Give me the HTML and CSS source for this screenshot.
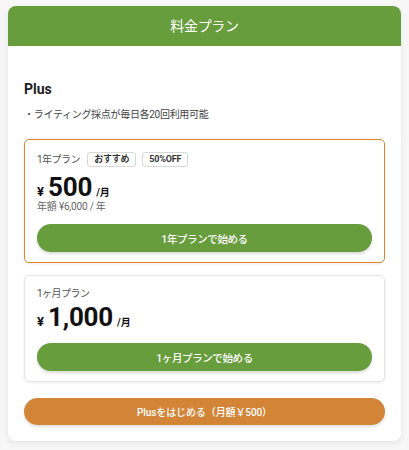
FILE: index.html
```html
<!DOCTYPE html>
<html lang="ja">
<head>
	<meta charset="UTF-8">
	<title>料金プラン</title>
	<link rel="stylesheet" href="styles.css">
</head>
<body>
	<div class="page">
		<div class="card">
			<div class="card-head">料金プラン</div>
			<div class="card-body">
				<h2 class="plan-name">Plus</h2>
				<p class="feature">・ライティング採点が毎日各20回利用可能</p>

				<div class="option option-best">
					<div class="option-top">
						<span class="option-label">1年プラン</span>
						<span class="badge">おすすめ</span>
						<span class="badge">50%OFF</span>
					</div>
					<div class="price">
						<span class="yen">¥</span>
						<span class="amount">500</span>
						<span class="unit">/月</span>
					</div>
					<div class="annual">年額 ¥6,000 / 年</div>
					<button class="btn btn-green">1年プランで始める</button>
				</div>

				<div class="option option-month">
					<div class="option-top">
						<span class="option-label">1ヶ月プラン</span>
					</div>
					<div class="price">
						<span class="yen">¥</span>
						<span class="amount">1,000</span>
						<span class="unit">/月</span>
					</div>
					<button class="btn btn-green">1ヶ月プランで始める</button>
				</div>

				<button class="btn btn-orange">Plusをはじめる（月額￥500）</button>
			</div>
		</div>
	</div>
</body>
</html>
```
FILE: styles.css
```css
* {
	margin: 0;
	padding: 0;
	box-sizing: border-box;
}

html,
body {
	width: 100%;
	height: 100%;
}

body {
	background: #f7f7f7;
	font-family: Roboto, "Noto Sans CJK JP", sans-serif;
	color: #222;
}

.page {
	padding: 6px 8px;
}

.card {
	background: #fff;
	border-radius: 8px;
	overflow: hidden;
	box-shadow: 0 2px 6px rgba(0, 0, 0, 0.08);
}

.card-head {
	height: 40px;
	line-height: 40px;
	background: #689d3d;
	color: #fff;
	font-size: 14px;
	letter-spacing: -0.3px;
	text-align: center;
}

.card-body {
	padding: 33px 16px 16px;
}

.plan-name {
	font-size: 14px;
	font-weight: bold;
	line-height: 20px;
	color: #1c1c1c;
}

.feature {
	margin-top: 8px;
	font-size: 10px;
	letter-spacing: -0.3px;
	line-height: 16px;
	color: #444;
}

.option {
	margin-top: 16px;
	padding: 12px 12px 10px;
	border: 1px solid #e6e6e6;
	border-radius: 5px;
	box-shadow: 0 1px 3px rgba(0, 0, 0, 0.08);
}

.option-best {
	border-color: #e0852b;
}

.option + .option {
	margin-top: 12px;
}

.option-top {
	display: flex;
	align-items: center;
	gap: 6px;
}

.option-label {
	font-size: 10px;
	letter-spacing: -0.5px;
	line-height: 12px;
	color: #555;
	margin-right: 1px;
}

.badge {
	height: 15px;
	line-height: 13px;
	padding: 0 6px;
	border: 1px solid #d8d8d8;
	border-radius: 3px;
	font-size: 9px;
	letter-spacing: -0.2px;
	font-weight: bold;
	color: #333;
}

.price {
	display: flex;
	align-items: baseline;
	gap: 4px;
	margin-top: 6px;
	height: 28px;
	line-height: 28px;
	font-weight: bold;
	color: #111;
}

.option-month .price {
	margin-top: 3px;
}

.yen {
	font-size: 13px;
}

.amount {
	font-size: 26px;
	letter-spacing: -0.2px;
}

.unit {
	font-size: 10px;
}

.annual {
	font-size: 10px;
	letter-spacing: -0.2px;
	line-height: 12px;
	color: #666;
}

.btn {
	display: block;
	width: 100%;
	height: 28px;
	border: 0;
	border-radius: 14px;
	color: #fff;
	font-family: inherit;
	font-size: 10.5px;
	letter-spacing: -0.4px;
	font-weight: 500;
	outline: none;
}

.btn-green {
	margin-top: 12px;
	background: #689d3d;
	box-shadow: 0 2px 3px rgba(0, 0, 0, 0.15);
}

.option-best .btn-green {
	margin-top: 11px;
}

.btn-orange {
	margin-top: 16px;
	height: 27px;
	font-size: 10px;
	letter-spacing: -0.1px;
	background: #d28537;
	box-shadow: 0 2px 3px rgba(0, 0, 0, 0.12);
}
```
